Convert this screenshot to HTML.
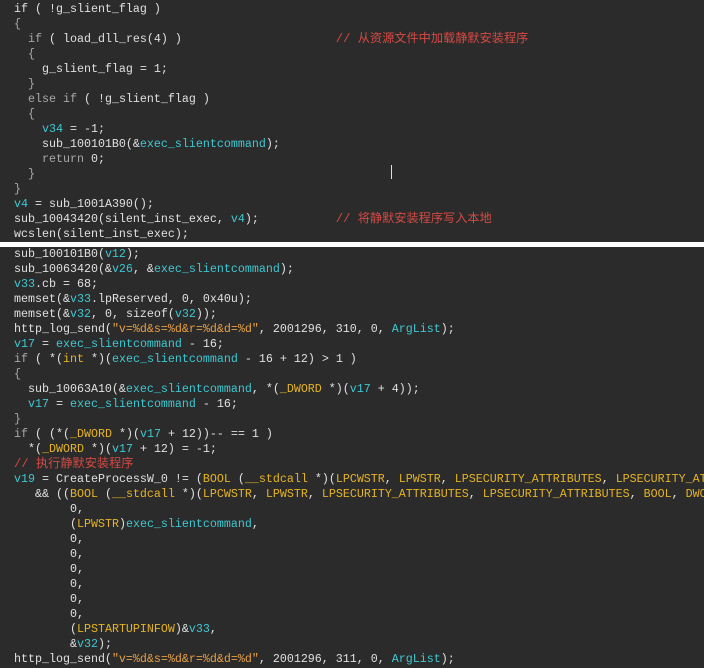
<!DOCTYPE html><html><head><meta charset="utf-8"><style>
body{margin:0;background:#fff;width:704px;height:668px;overflow:hidden}
.p{position:absolute;left:0;width:704px;background:#2b2b2b;overflow:hidden}
pre{margin:0;font-family:"Liberation Mono","Noto Sans CJK SC",monospace;font-size:11.67px;line-height:15px;color:#e0e0e0;white-space:pre;position:absolute;left:14px}
.k{color:#a8a8a8}.c{color:#3ec8d2}.y{color:#e6b422}.s{color:#e8a045}.m{color:#d64a44;font-size:12.2px}
</style></head><body>
<div class="p" style="top:0;height:242px">
<pre style="top:2px">if ( !g_slient_flag )
<span class="k">{</span>
  <span class="k">if</span> ( load_dll_res(4) )                      <span class="m">// 从资源文件中加载静默安装程序</span>
  <span class="k">{</span>
    g_slient_flag = 1;
  <span class="k">}</span>
  <span class="k">else if</span> ( !g_slient_flag )
  <span class="k">{</span>
    <span class="c">v34</span> = -1;
    sub_100101B0(&amp;<span class="c">exec_slientcommand</span>);
    <span class="k">return</span> 0;
  <span class="k">}</span>
<span class="k">}</span>
<span class="c">v4</span> = sub_1001A390();
sub_10043420(silent_inst_exec, <span class="c">v4</span>);           <span class="m">// 将静默安装程序写入本地</span>
wcslen(silent_inst_exec);</pre>
<div style="position:absolute;left:391px;top:165px;width:1px;height:14px;background:#e0e0e0"></div>
</div>
<div class="p" style="top:247px;height:421px">
<pre style="top:0px">sub_100101B0(<span class="c">v12</span>);
sub_10063420(&amp;<span class="c">v26</span>, &amp;<span class="c">exec_slientcommand</span>);
<span class="c">v33</span>.cb = 68;
memset(&amp;<span class="c">v33</span>.lpReserved, 0, 0x40u);
memset(&amp;<span class="c">v32</span>, 0, sizeof(<span class="c">v32</span>));
http_log_send(<span class="s">"v=%d&amp;s=%d&amp;r=%d&amp;d=%d"</span>, 2001296, 310, 0, <span class="c">ArgList</span>);
<span class="c">v17</span> = <span class="c">exec_slientcommand</span> - 16;
<span class="k">if</span> ( *(<span class="y">int</span> *)(<span class="c">exec_slientcommand</span> - 16 + 12) &gt; 1 )
<span class="k">{</span>
  sub_10063A10(&amp;<span class="c">exec_slientcommand</span>, *(<span class="y">_DWORD</span> *)(<span class="c">v17</span> + 4));
  <span class="c">v17</span> = <span class="c">exec_slientcommand</span> - 16;
<span class="k">}</span>
<span class="k">if</span> ( (*(<span class="y">_DWORD</span> *)(<span class="c">v17</span> + 12))-- == 1 )
  *(<span class="y">_DWORD</span> *)(<span class="c">v17</span> + 12) = -1;
<span class="m">// 执行静默安装程序</span>
<span class="c">v19</span> = CreateProcessW_0 != (<span class="y">BOOL</span> (<span class="y">__stdcall</span> *)(<span class="y">LPCWSTR</span>, <span class="y">LPWSTR</span>, <span class="y">LPSECURITY_ATTRIBUTES</span>, <span class="y">LPSECURITY_ATTRIBUTES</span>, <span class="y">BOOL</span>, <span class="y">DWORD</span>
   &amp;&amp; ((<span class="y">BOOL</span> (<span class="y">__stdcall</span> *)(<span class="y">LPCWSTR</span>, <span class="y">LPWSTR</span>, <span class="y">LPSECURITY_ATTRIBUTES</span>, <span class="y">LPSECURITY_ATTRIBUTES</span>, <span class="y">BOOL</span>, <span class="y">DWORD</span>
        0,
        (<span class="y">LPWSTR</span>)<span class="c">exec_slientcommand</span>,
        0,
        0,
        0,
        0,
        0,
        0,
        (<span class="y">LPSTARTUPINFOW</span>)&amp;<span class="c">v33</span>,
        &amp;<span class="c">v32</span>);
http_log_send(<span class="s">"v=%d&amp;s=%d&amp;r=%d&amp;d=%d"</span>, 2001296, 311, 0, <span class="c">ArgList</span>);</pre>
</div>
</body></html>
